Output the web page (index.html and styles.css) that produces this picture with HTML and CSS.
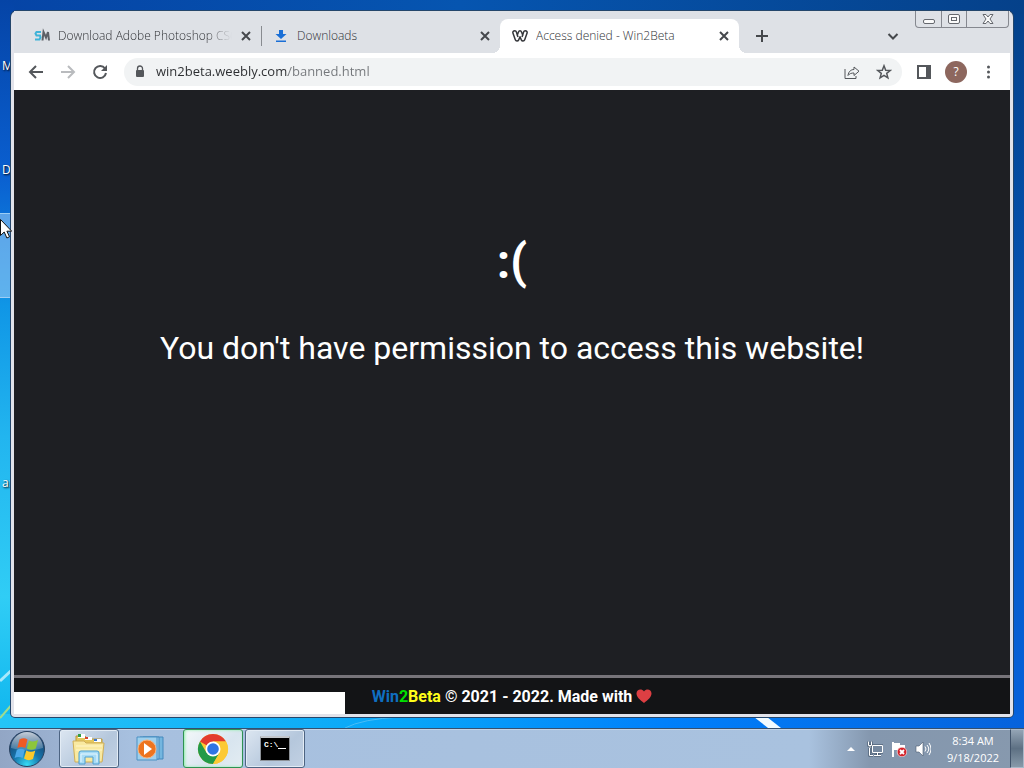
FILE: index.html
```html
<!DOCTYPE html>
<html lang="en">
<head>
  <meta charset="UTF-8">
  <title>Access denied - Win2Beta</title>
  <link rel="stylesheet" href="styles.css">
</head>
<body>
  <div class="desktop">
    <svg class="wallpaper" viewBox="0 0 1024 728" preserveAspectRatio="none">
      <path d="M0 681L14 668" stroke="#a8e8fb" stroke-width="3"/>
      <path d="M0 718L14 702" stroke="#9fdc8e" stroke-width="2"/>
      <path d="M754 717h13l14 11h-13z" fill="#f2fbff"/>
      <path d="M345 728Q362 719 400 717" stroke="#4abcf5" fill="none"/>
    </svg>
    <div class="shortcut shortcut-m">M</div>
    <div class="shortcut shortcut-d">D</div>
    <div class="shortcut shortcut-selected"></div>
    <div class="shortcut shortcut-a">ar</div>

    <div class="window">
      <div class="tab-strip">
        <div class="tab">
          <svg class="favicon" viewBox="0 0 16 16" fill="none" stroke-width="2">
            <path d="M7 4H2.500L1.500 5.500 2.500 7.500H6L6.500 9.500 5.500 11.500H1" stroke="#3fb3d8"/>
            <path d="M8.500 12.500L9.500 4 12 9.500 14 4 15 12.500" stroke="#5d6066"/>
          </svg>
          <span class="tab-title fade">Download Adobe Photoshop CS6</span>
          <button class="tab-close" aria-label="Close tab"><svg viewBox="0 0 16 16"><path d="M4 4l8 8M12 4l-8 8"/></svg></button>
        </div>
        <div class="tab tab-divided">
          <svg class="favicon" viewBox="0 0 16 16" fill="#1a6fd6">
            <path d="M6 2h4v4h3.500L8 11 2.500 6H6zM3 12.500h10V14H3z"/>
          </svg>
          <span class="tab-title">Downloads</span>
          <button class="tab-close" aria-label="Close tab"><svg viewBox="0 0 16 16"><path d="M4 4l8 8M12 4l-8 8"/></svg></button>
        </div>
        <div class="tab tab-active">
          <svg class="favicon" viewBox="0 0 16 16" fill="none" stroke="#35373b" stroke-width="1.500" stroke-linejoin="round">
            <path d="M2.800 2.800C1.300 2.800.5 3.800 1 5.200L3.300 11.800C3.900 13.500 6 13.500 6.700 11.900L8 8.700 9.300 11.900C10 13.500 12.100 13.500 12.700 11.800L15 5.200C15.500 3.800 14.700 2.800 13.200 2.800 12.300 2.800 11.800 3.300 11.500 4.200L10.700 7 9.600 4.200C9.300 3.300 8.800 2.800 8 2.800S6.700 3.300 6.400 4.200L5.300 7 4.500 4.200C4.200 3.300 3.700 2.800 2.800 2.800z"/>
            <path d="M5.300 7L6 9M10.700 7L10 9"/>
          </svg>
          <span class="tab-title">Access denied - Win2Beta</span>
          <button class="tab-close" aria-label="Close tab"><svg viewBox="0 0 16 16"><path d="M4 4l8 8M12 4l-8 8"/></svg></button>
        </div>
        <button class="new-tab" aria-label="New tab"><svg viewBox="0 0 16 16"><path d="M8 2v12M2 8h12"/></svg></button>
        <button class="tab-search" aria-label="Search tabs"><svg viewBox="0 0 16 16"><path d="M3.500 6L8 10.500 12.500 6"/></svg></button>
        <div class="caption">
          <button class="caption-button" aria-label="Minimize"><svg viewBox="0 0 16 16"><rect x="2.500" y="8.500" width="11" height="4" rx="1.500"/></svg></button>
          <button class="caption-button" aria-label="Restore"><svg viewBox="0 0 16 16"><rect x="2.500" y="3.500" width="11" height="9" rx="1.500"/><rect x="5.500" y="6.500" width="5" height="3"/></svg></button>
          <button class="caption-button caption-close" aria-label="Close"><svg viewBox="0 0 16 16"><path d="M3 3.500h3L8 6l2-2.500h3L10 8l3 4.500h-3L8 10l-2 2.500H3L6 8z"/></svg></button>
        </div>
      </div>

      <div class="toolbar">
        <button class="tool" aria-label="Back"><svg viewBox="0 0 16 16"><path d="M15 8H2M8 2L2 8l6 6"/></svg></button>
        <button class="tool" aria-label="Forward" disabled><svg viewBox="0 0 16 16"><path d="M1 8h13M8 2l6 6-6 6"/></svg></button>
        <button class="tool" aria-label="Reload"><svg viewBox="0 0 16 16"><path d="M13 4.500A6 6 0 1 0 14 9"/><path d="M15 1v6H9z" fill="#54575b" stroke="none"/></svg></button>
        <div class="omnibox">
          <svg class="lock" viewBox="0 0 16 16"><path d="M5.500 7V4.500a2.500 2.500 0 0 1 5 0V7" fill="none" stroke="#54575b" stroke-width="1.300"/><rect x="4" y="6" width="8" height="7" rx="1" fill="#54575b"/></svg>
          <input class="url" type="text" aria-label="Address" value="win2beta.weebly.com/banned.html">
          <button class="tool" aria-label="Share"><svg class="thin" viewBox="0 0 16 16"><path d="M1 5v9.500h11V12M4 11.500C4.500 7.500 7 5.500 10 5.500V3l5 4.200-5 4.300V9C7.500 9 5.500 9.500 4 11.500z"/></svg></button>
          <button class="tool" aria-label="Bookmark"><svg class="star" viewBox="0 0 16 16"><path d="M8 1.800l1.700 4.400 4.600.3-3.600 2.900 1.200 4.500L8 11.400l-3.900 2.500 1.200-4.500-3.600-2.900 4.600-.3z"/></svg></button>
        </div>
        <button class="tool" aria-label="Side panel"><svg viewBox="0 0 16 16"><path d="M2 2h12v12H2z"/><path d="M10 2h4v12h-4z" fill="#54575b" stroke="none"/></svg></button>
        <button class="tool" aria-label="Profile"><span class="avatar">?</span></button>
        <button class="tool" aria-label="Menu"><svg viewBox="0 0 16 16"><g fill="#54575b" stroke="none"><circle cx="8.500" cy="3" r="1.500"/><circle cx="8.500" cy="8" r="1.500"/><circle cx="8.500" cy="13" r="1.500"/></g></svg></button>
      </div>

      <div class="page">
        <main class="message">
          <h1>:(</h1>
          <p>You don't have permission to access this website!</p>
        </main>
        <footer class="footer">
          <span><span class="blue">Win</span><span class="green">2</span><span class="yellow">Beta</span> © 2021 - 2022. Made with</span>
          <svg class="heart" viewBox="0 0 16 16"><path d="M8 15C4 12 .5 9 .5 5.500.500 1.500 5.500 0 8 3.500 10.500 0 15.500 1.500 15.500 5.500 15.500 9 12 12 8 15z" fill="#dd3f43"/></svg>
        </footer>
        <div class="status-bubble"></div>
      </div>
    </div>

    <svg class="cursor" viewBox="0 0 12 20"><path d="M.5.500v16l3.700-3.500 2.700 6 2.600-1.200-2.600-5.600h4.800z" fill="#fff" stroke="#111"/></svg>
  </div>

  <div class="taskbar">
    <button class="start" aria-label="Start">
      <svg viewBox="0 0 38 38">
        <defs>
          <radialGradient id="orb" cx="50%" cy="95%" r="85%">
            <stop offset="0" stop-color="#36dcf5"/>
            <stop offset=".45" stop-color="#1777ad"/>
            <stop offset="1" stop-color="#173f6c"/>
          </radialGradient>
          <linearGradient id="shine" x2="0" y2="1">
            <stop offset="0" stop-color="#fff" stop-opacity=".75"/>
            <stop offset="1" stop-color="#fff" stop-opacity=".15"/>
          </linearGradient>
        </defs>
        <circle cx="19" cy="19" r="17.500" fill="url(#orb)" stroke="#29415f"/>
        <path d="M3 18a16 16 0 0 1 32 0Q19 23 3 18z" fill="url(#shine)"/>
        <path d="M11.500 9.500q4.500-2.500 8 0l-2.200 8.500q-4-2-8 0z" fill="#ee5a24"/>
        <path d="M21 10.500q4.500 2 9-.5l-2.200 8.500q-4.500 2.500-9 0z" fill="#8cc63c"/>
        <path d="M8.800 20q4-2.500 8 0l-2.200 8q-4-2-8 0z" fill="#4aa8e8"/>
        <path d="M18.300 20.500q4.500 2.500 9 0L25 29q-4.500 2.500-9-.5z" fill="#fcc92b"/>
      </svg>
    </button>
    <button class="task task-open" aria-label="Windows Explorer">
      <svg viewBox="0 0 36 32">
        <path d="M5 3h9l2 3h15v22H5z" fill="#e5c75e" stroke="#b9973b"/>
        <path d="M7 1h7v4H7z" fill="#fff"/><path d="M7 1h3v3H7z" fill="#2f9c45"/>
        <path d="M14 4h7v3h-7z" fill="#fff"/><path d="M14 4h3v2h-3z" fill="#d9452e"/>
        <path d="M23 6h7v3h-7z" fill="#fff"/><path d="M23 6h3v2h-3z" fill="#3b77cf"/>
        <path d="M2 8h11l2 2h18l-2 19H4z" fill="#f9e9a0" stroke="#cfae57"/>
        <path d="M5 13h26M5 17h26" stroke="#fff6cb"/>
        <path d="M8 31V20q0-2 2-2h16q2 0 2 2v11h-6v-7h-8v7z" fill="#a8dcf5" stroke="#4c9fd1"/>
        <path d="M10 29v-8h16v8" fill="none" stroke="#e4f6ff"/>
      </svg>
    </button>
    <button class="task" aria-label="Windows Media Player">
      <svg viewBox="0 0 36 32">
        <path d="M10 4h20v22H10z" fill="#74b6df" stroke="#4589bd"/>
        <path d="M7 4h19v22H7z" fill="#9ccdec" stroke="#4589bd"/>
        <path d="M4 4h20v23H4z" fill="#9fd0ed" stroke="#4b91c4"/>
        <circle cx="14" cy="16" r="9" fill="#ed741f" stroke="#f9b17b"/>
        <path d="M11 10l8 6-8 6z" fill="#fff"/>
      </svg>
    </button>
    <button class="task task-open task-active" aria-label="Google Chrome">
      <svg viewBox="0 0 36 32">
        <circle cx="18" cy="16" r="15" fill="#fcc934"/>
        <path d="M18 16L5 8.500A15 15 0 0 1 31 8.500H18z" fill="#e33b2e"/>
        <path d="M5 8.500A15 15 0 0 0 18 31L24.500 19.700 18 16 11.500 19.700z" fill="#229a49"/>
        <path d="M18 31A15 15 0 0 0 31 8.500H18L24.500 19.700z" fill="#fcc934"/>
        <circle cx="18" cy="16" r="7.500" fill="#fff"/>
        <circle cx="18" cy="16" r="5.800" fill="#2f75e5"/>
      </svg>
    </button>
    <button class="task task-open" aria-label="Command Prompt">
      <span class="console">C:\<span class="caret"></span></span>
    </button>
    <div class="tray">
      <button aria-label="Show hidden icons"><svg viewBox="0 0 16 16"><path d="M4 10l4-4 4 4z" fill="#fff"/></svg></button>
      <button aria-label="Network"><svg viewBox="0 0 16 16" fill="none" stroke="#fff"><path d="M5.500 4.500h10v7h-10zM10.500 12v2M7 14.500h7M2.500 7v7.500H6M1.500.500v4h3v-4M3 4.500V7" stroke="#3b4c61" stroke-width="2"/><path d="M5.500 4.500h10v7h-10z" fill="#75889f"/><path d="M10.500 12v2M7 14.500h7M2.500 7v7.500H6M1.500.500v4h3v-4M3 4.500V7"/></svg></button>
      <button aria-label="Action Center"><svg viewBox="0 0 16 16"><path d="M2 1v15" stroke="#fff" stroke-width="2"/><path d="M3 2h6v2h5v7H8V9H3z" fill="#fff"/><circle cx="11" cy="11" r="4.800" fill="#d3222a" stroke="#fff" stroke-width=".6"/><path d="M9 9l4 4M13 9l-4 4" stroke="#fff" stroke-width="1.800"/></svg></button>
      <button aria-label="Volume"><svg viewBox="0 0 16 16"><path d="M1 5h3l4-4v14l-4-4H1z" fill="#fff" stroke="#4a5b70" stroke-width=".6"/><path d="M10 5.500q2 2.500 0 5M12 4q3.500 4 0 8M14 2q4 6 0 12" fill="none" stroke="#fff"/></svg></button>
      <div class="clock"><span>8:34 AM</span><span>9/18/2022</span></div>
    </div>
    <button class="show-desktop" aria-label="Show desktop"></button>
  </div>
</body>
</html>
```
FILE: styles.css
```css
* {
  box-sizing: border-box;
}
body {
  margin: 0;
  height: 100vh;
  display: flex;
  flex-direction: column;
  overflow: hidden;
  font-family: "Open Sans", "Noto Sans", sans-serif;
  font-size: 12px;
}
button {
  padding: 0;
  border: none;
  background: none;
  font: inherit;
  display: flex;
  align-items: center;
  justify-content: center;
}
svg {
  display: block;
}

/* desktop */
.desktop {
  flex: 1;
  min-height: 0;
  position: relative;
  display: flex;
  padding: 11px;
  background:
    linear-gradient(to right, #25c5f7, #08a5f8 40%, #0080fb 65%, #0662dc) bottom / 100% 14px no-repeat,
    linear-gradient(#0544a6, #0a5fd0 24%, #1096e6 42%, #22b5ef 60%, #30cdf5 82%, #0fb5ee) left / 14px 100% no-repeat,
    linear-gradient(to right, #0544a6, #0655b0 45%, #05418a) top / 100% 14px no-repeat,
    linear-gradient(#05418a, #0655b5 45%, #0662dc);
}
.wallpaper {
  position: absolute;
  inset: 0;
  width: 100%;
  height: 100%;
}
.shortcut {
  position: absolute;
  left: 2px;
  color: #fff;
  line-height: 16px;
  text-shadow: 1px 1px 2px #000;
}
.shortcut-m {
  top: 58px;
}
.shortcut-d {
  top: 162px;
}
.shortcut-a {
  top: 475px;
}
.shortcut-selected {
  left: -62px;
  top: 213px;
  width: 76px;
  height: 85px;
  background: rgba(160, 205, 245, 0.55);
  border: 1px solid #9ccdf5;
}
.cursor {
  position: absolute;
  left: 0;
  top: 219px;
  width: 12px;
  height: 20px;
}

/* browser window */
.window {
  position: relative;
  flex: 1;
  display: flex;
  flex-direction: column;
  min-width: 0;
  border: 3px solid #e2e3ea;
  border-top: none;
  border-radius: 6px 6px 4px 4px;
  background: #e2e3ea;
  box-shadow: 0 0 0 1px #24466b;
}
.tab-strip {
  display: flex;
  height: 42px;
  padding: 8px 1px 0 8px;
  background: #dee1e6;
}
.tab {
  display: flex;
  align-items: center;
  width: 239px;
  padding: 0 7px 0 12px;
  color: #303236;
}
.tab-divided {
  background: linear-gradient(#888b90, #888b90) left center / 1px 20px no-repeat;
}
.tab-active {
  position: relative;
  background: #fff;
  border-radius: 8px 8px 0 0;
}
.tab-active::before,
.tab-active::after {
  content: "";
  position: absolute;
  bottom: 0;
  width: 8px;
  height: 8px;
}
.tab-active::before {
  left: -8px;
  background: radial-gradient(circle at 0 0, #dee1e6 8px, #fff 8px);
}
.tab-active::after {
  right: -8px;
  background: radial-gradient(circle at 100% 0, #dee1e6 8px, #fff 8px);
}
.favicon {
  width: 16px;
  height: 16px;
  flex: none;
}
.tab-title {
  flex: 1;
  margin: 0 6px 2px 8px;
  overflow: hidden;
  white-space: nowrap;
  font-weight: 300;
}
.fade {
  mask-image: linear-gradient(to right, #000 85%, transparent);
}
.tab-close svg,
.new-tab svg,
.tab-search svg,
.tool svg {
  width: 16px;
  height: 16px;
  fill: none;
  stroke: #45484c;
  stroke-width: 2;
}
.new-tab {
  width: 28px;
  margin-left: 9px;
}
.tab-search {
  width: 28px;
  margin-left: auto;
  margin-right: 8px;
}
.caption {
  display: flex;
  align-self: flex-start;
  height: 17px;
  margin-top: -8px;
  border: 1px solid #85888f;
  border-top: none;
  border-radius: 0 0 4px 4px;
}
.caption-button {
  width: 25px;
}
.caption-button + .caption-button {
  border-left: 1px solid #85888f;
}
.caption .caption-close {
  width: 42px;
}
.caption-button svg {
  width: 16px;
  height: 16px;
  fill: #fafafa;
  stroke: #65686e;
}

/* toolbar */
.toolbar {
  display: flex;
  align-items: center;
  height: 37px;
  padding: 0 6px;
  background: #fff;
}
.tool {
  width: 32px;
  height: 28px;
  flex: none;
}
.tool svg {
  stroke: #54575b;
}
.tool:disabled svg {
  stroke: #b9bbbe;
}
.tool .thin {
  stroke-width: 1;
}
.tool .star {
  stroke-width: 1.5;
}
.omnibox {
  flex: 1;
  min-width: 0;
  display: flex;
  align-items: center;
  height: 28px;
  margin: 0 6px 0 8px;
  padding: 0 2px 0 8px;
  border-radius: 14px;
  background: #f1f3f4;
}
.lock {
  width: 16px;
  height: 16px;
  flex: none;
}
.url {
  flex: 1;
  min-width: 0;
  margin: 0 0 2px 8px;
  padding: 0;
  border: none;
  outline: none;
  font: 13px "Open Sans", "Noto Sans", sans-serif;
  color: transparent;
  /* host is dark, path is grey */
  background: linear-gradient(to right, #2b2d30 132px, #74777b 132px);
  background-clip: text;
}
.avatar {
  width: 22px;
  border-radius: 50%;
  background: #8d675e;
  color: #fff;
  font-size: 12px;
  line-height: 22px;
}

/* page */
.page {
  position: relative;
  flex: 1;
  min-height: 0;
  display: flex;
  flex-direction: column;
  background: #1e1f23;
  color: #fff;
  font-family: Roboto, sans-serif;
}
.message {
  flex: 1;
  padding-top: 140px;
  text-align: center;
}
.message h1 {
  margin: 0;
  font-size: 48px;
  font-weight: bold;
  line-height: 64px;
}
.message p {
  margin: 32px 0 0;
  font-size: 32px;
  line-height: 44px;
}
.footer {
  display: flex;
  align-items: center;
  justify-content: center;
  gap: 4px;
  height: 39px;
  border-top: 3px solid #77747a;
  background: #131416;
  font-size: 16px;
  font-weight: bold;
}
.blue {
  color: #0f6fc0;
}
.green {
  color: #00e000;
}
.yellow {
  color: #ffff1a;
}
.heart {
  width: 16px;
  height: 16px;
}
.status-bubble {
  position: absolute;
  left: 0;
  bottom: 0;
  width: 331px;
  height: 22px;
  background: #fff;
}

/* taskbar */
.taskbar {
  display: flex;
  height: 40px;
  border-top: 1px solid #35506f;
  background: linear-gradient(to right, #92a6c5, #a7c0df 130px, #a9c2df 79%, #8497ae 85%, #8799ae);
  box-shadow: inset 0 1px 0 #c3d4e8;
}
.start {
  width: 54px;
  margin-right: 5px;
}
.start svg {
  width: 38px;
  height: 38px;
}
.task {
  width: 60px;
  margin-right: 2px;
  border: 1px solid transparent;
  border-radius: 3px;
}
.task svg {
  width: 36px;
  height: 32px;
}
.task-open {
  border-color: #4d6482;
  background: linear-gradient(135deg, #dce6f1, #b5c7dc 60%, #c2d1e3);
  box-shadow: inset 0 0 0 1px #e3ecf5;
}
.task-active {
  border-color: #2f9152;
  background: linear-gradient(135deg, #f4f8fa, #d8e5ef 60%, #e3ecf2);
  box-shadow: inset 1px 0 3px #8bf0a8;
}
.console {
  display: flex;
  width: 30px;
  height: 25px;
  padding-left: 3px;
  border: 1px solid #8d9299;
  border-top: 2px solid #c2c6cb;
  background: #000;
  color: #fff;
  font: bold 8px/14px "Liberation Mono", monospace;
}
.caret {
  width: 8px;
  height: 11px;
  border-bottom: 1px solid #fff;
}
.tray {
  display: flex;
  align-items: center;
  gap: 8px;
  margin-left: auto;
}
.tray svg {
  width: 16px;
  height: 16px;
}
.clock {
  display: flex;
  flex-direction: column;
  width: 68px;
  margin-right: 3px;
  color: #fff;
  font-size: 11px;
  line-height: 17px;
  text-align: center;
}
.show-desktop {
  width: 14px;
  border: 1px solid #a9b8c8;
  border-left-color: #41536a;
  background: linear-gradient(#94a4b5, #5d7083 50%, #8799a9);
}
```
